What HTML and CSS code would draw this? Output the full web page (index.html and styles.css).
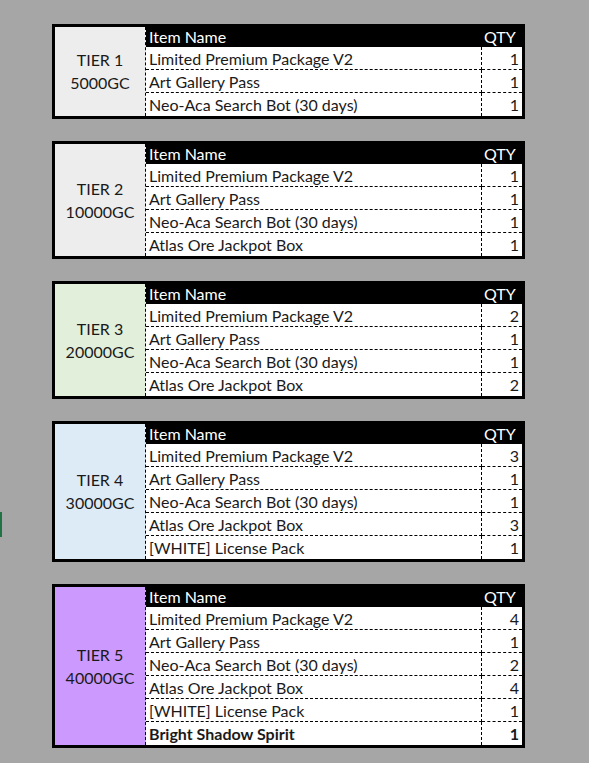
FILE: index.html
```html
<!DOCTYPE html>
<html>
<head>
<meta charset="utf-8">
<link rel="stylesheet" href="styles.css">
</head>
<body>
<div class="sheet">
  <div class="rowmark"></div>

  <div class="tier">
    <div class="label gray"><span>TIER 1</span><span>5000GC</span></div>
    <div class="items">
      <div class="hd name">Item Name</div><div class="hd qty">QTY</div>
      <div class="c name">Limited Premium Package V2</div><div class="c qty">1</div>
      <div class="c name">Art Gallery Pass</div><div class="c qty">1</div>
      <div class="c name last">Neo-Aca Search Bot (30 days)</div><div class="c qty last">1</div>
    </div>
  </div>

  <div class="tier">
    <div class="label gray"><span>TIER 2</span><span>10000GC</span></div>
    <div class="items">
      <div class="hd name">Item Name</div><div class="hd qty">QTY</div>
      <div class="c name">Limited Premium Package V2</div><div class="c qty">1</div>
      <div class="c name">Art Gallery Pass</div><div class="c qty">1</div>
      <div class="c name">Neo-Aca Search Bot (30 days)</div><div class="c qty">1</div>
      <div class="c name last">Atlas Ore Jackpot Box</div><div class="c qty last">1</div>
    </div>
  </div>

  <div class="tier">
    <div class="label green"><span>TIER 3</span><span>20000GC</span></div>
    <div class="items">
      <div class="hd name">Item Name</div><div class="hd qty">QTY</div>
      <div class="c name">Limited Premium Package V2</div><div class="c qty">2</div>
      <div class="c name">Art Gallery Pass</div><div class="c qty">1</div>
      <div class="c name">Neo-Aca Search Bot (30 days)</div><div class="c qty">1</div>
      <div class="c name last">Atlas Ore Jackpot Box</div><div class="c qty last">2</div>
    </div>
  </div>

  <div class="tier">
    <div class="label blue"><span>TIER 4</span><span>30000GC</span></div>
    <div class="items">
      <div class="hd name">Item Name</div><div class="hd qty">QTY</div>
      <div class="c name">Limited Premium Package V2</div><div class="c qty">3</div>
      <div class="c name">Art Gallery Pass</div><div class="c qty">1</div>
      <div class="c name">Neo-Aca Search Bot (30 days)</div><div class="c qty">1</div>
      <div class="c name">Atlas Ore Jackpot Box</div><div class="c qty">3</div>
      <div class="c name last">[WHITE] License Pack</div><div class="c qty last">1</div>
    </div>
  </div>

  <div class="tier">
    <div class="label purple"><span>TIER 5</span><span>40000GC</span></div>
    <div class="items">
      <div class="hd name">Item Name</div><div class="hd qty">QTY</div>
      <div class="c name">Limited Premium Package V2</div><div class="c qty">4</div>
      <div class="c name">Art Gallery Pass</div><div class="c qty">1</div>
      <div class="c name">Neo-Aca Search Bot (30 days)</div><div class="c qty">2</div>
      <div class="c name">Atlas Ore Jackpot Box</div><div class="c qty">4</div>
      <div class="c name">[WHITE] License Pack</div><div class="c qty">1</div>
      <div class="c name last bold">Bright Shadow Spirit</div><div class="c qty last bold">1</div>
    </div>
  </div>
</div>
</body>
</html>
```

FILE: styles.css
```css
html, body {
  margin: 0;
  padding: 0;
  background: #a6a6a6;
}
body {
  width: 589px;
  height: 763px;
  overflow: hidden;
  font-family: Lato, "Liberation Sans", sans-serif;
  font-size: 16px;
  color: #1a1a1a;
}
.sheet {
  position: relative;
  padding: 24px 0 0 52px;
  display: flex;
  flex-direction: column;
  align-items: flex-start;
  gap: 22px;
}
.rowmark {
  position: absolute;
  left: 0;
  top: 512px;
  width: 2px;
  height: 25px;
  background: #217346;
}
.tier {
  width: 467px;
  border: 3px solid #000;
  display: flex;
  background: #fff;
}
.label {
  width: 90px;
  flex: none;
  border-right: 1px dashed #000;
  display: flex;
  flex-direction: column;
  justify-content: center;
  align-items: center;
  line-height: 23px;
  padding-bottom: 1px;
}
.gray { background: #ededed; }
.green { background: #e2efda; }
.blue { background: #ddebf7; }
.purple { background: #cc99ff; }
.items {
  flex: 1;
  display: grid;
  grid-template-columns: 336px 40px;
  grid-template-rows: 20px;
  grid-auto-rows: 23px;
}
.hd {
  background: #000;
  color: #fff;
  line-height: 20px;
  padding-left: 3px;
  white-space: nowrap;
}
.hd.qty { padding-left: 2px; }
.c {
  box-sizing: border-box;
  height: 23px;
  line-height: 23px;
  border-bottom: 1px dashed #000;
  padding-left: 3px;
  white-space: nowrap;
  overflow: hidden;
}
.c.name { border-right: 1px dashed #000; }
.c.qty {
  text-align: right;
  padding-right: 3px;
}
.c.last { border-bottom: none; }
.bold { font-weight: bold; }
```
